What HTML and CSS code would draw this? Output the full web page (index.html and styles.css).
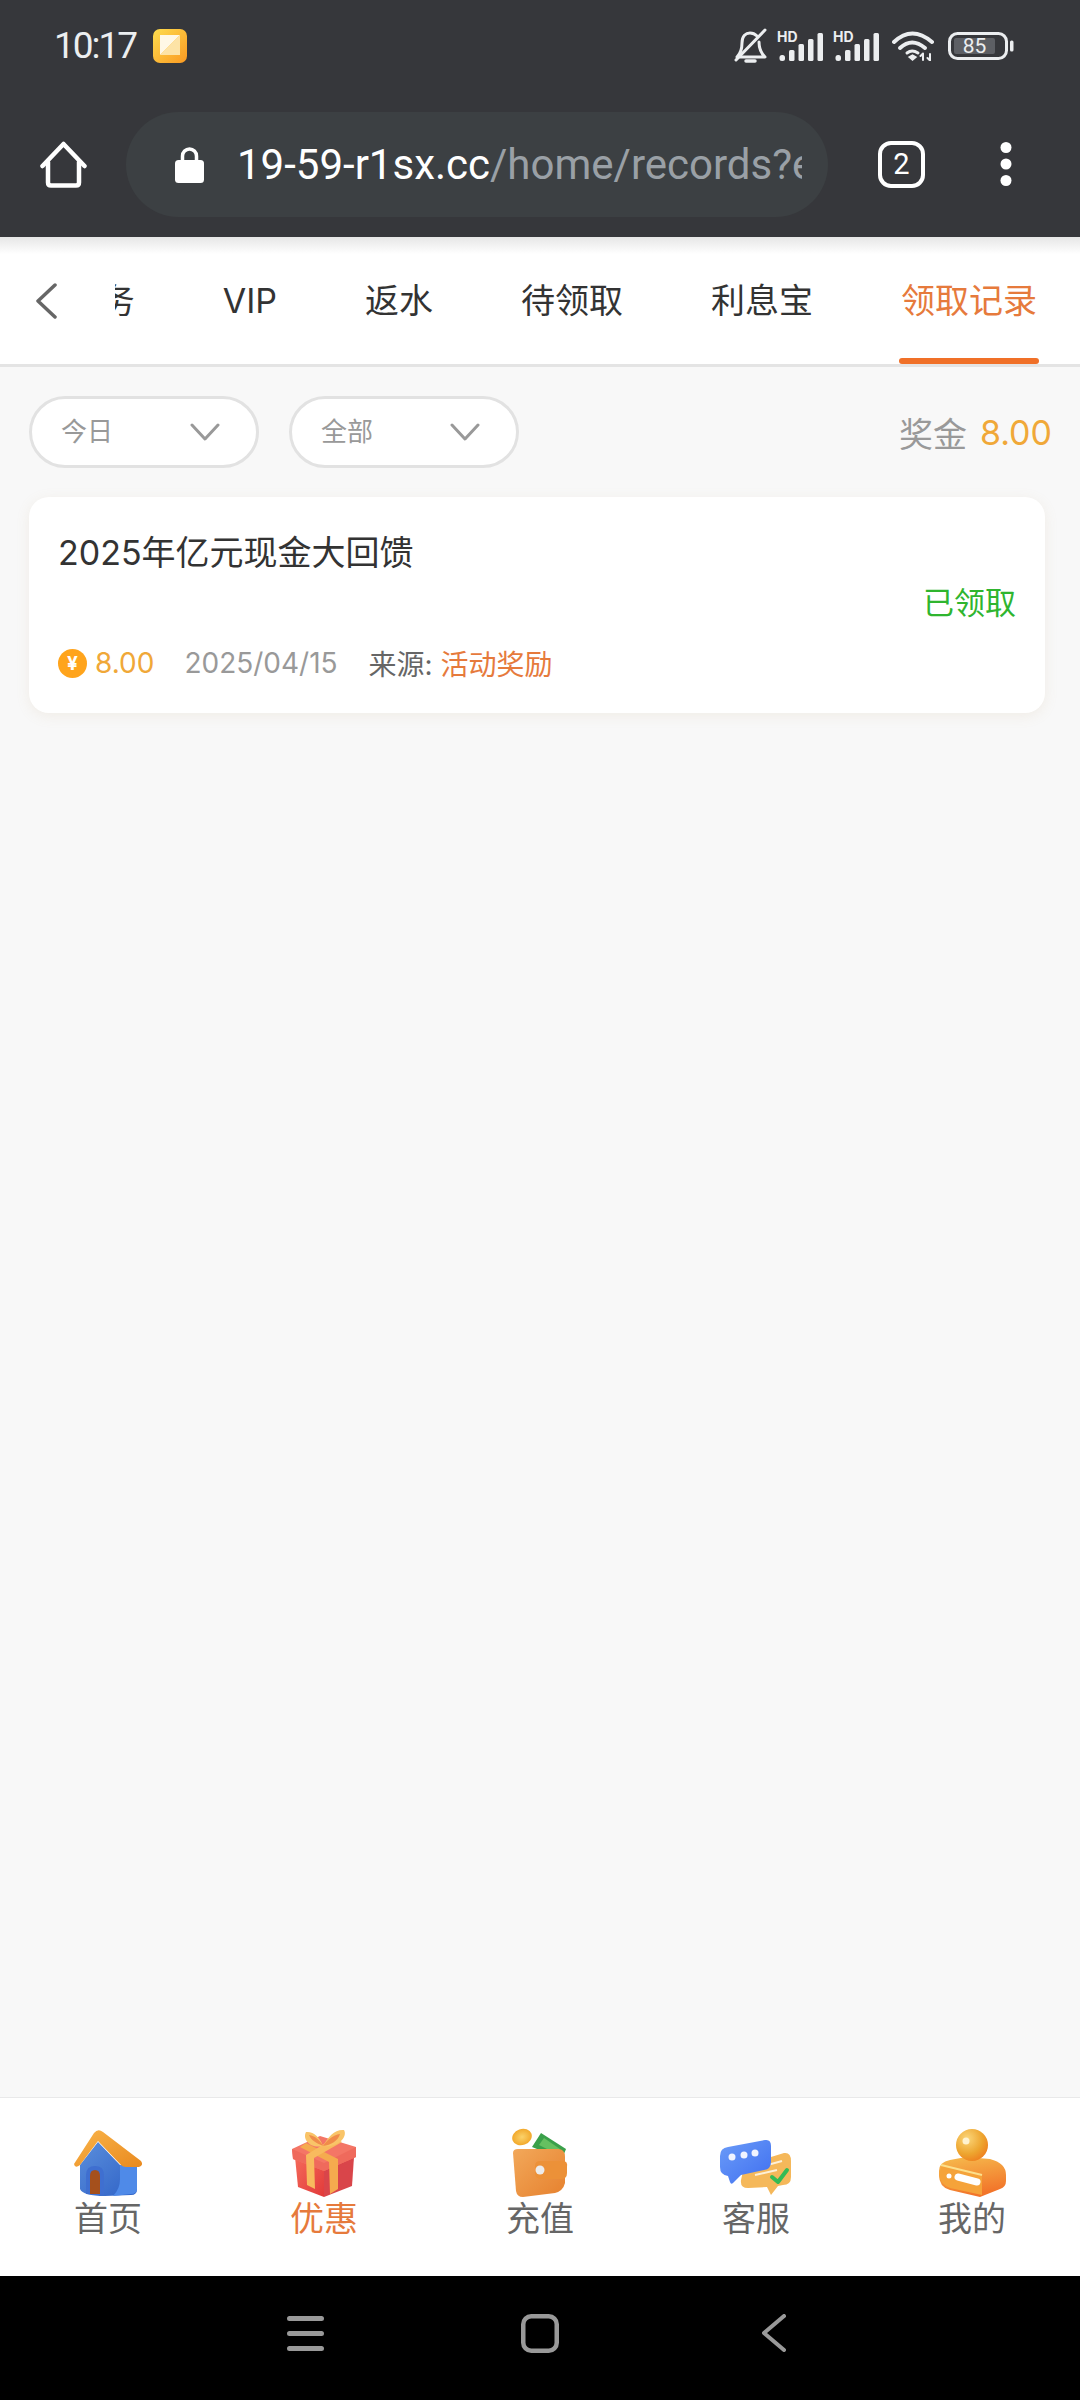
FILE: index.html
```html
<!DOCTYPE html>
<html lang="zh-CN">
<head>
<meta charset="utf-8">
<title>领取记录</title>
<link rel="stylesheet" href="styles.css">
</head>
<body>
<div class="phone">
  <header class="chrome">
    <div class="status">
      <div class="status-left">
        <span class="time">10:17</span>
        <svg class="notif" viewBox="0 0 34 34"><defs><linearGradient id="ng" x1="0" y1="0" x2="1" y2="1"><stop offset="0" stop-color="#fddc4e"/><stop offset="1" stop-color="#fb9a22"/></linearGradient></defs><rect width="34" height="34" rx="7" fill="url(#ng)"/><path d="M7 6H27L7 26Z" fill="#fff8e6"/><path d="M27 6V26H7Z" fill="#fde3a6"/></svg>
      </div>
      <div class="status-right">
        <svg class="bell" viewBox="0 0 34 36" fill="none" stroke="#eceef0" stroke-width="3" stroke-linecap="round" stroke-linejoin="round"><path d="M4 29C8 25 9 21 9 15C9 8 13 5 17 5C20 5 22 6 24 8M26 14C26 21 28 25 32 29H7"/><path d="M3 32L32 2"/><path d="M13 33H22" stroke-width="3.5"/></svg>
        <svg class="signal" viewBox="0 0 46 30"><text x="0" y="11" class="hd">HD</text><rect x="2.5" y="24" width="5.5" height="6" rx="2.5" fill="#eceef0"/><rect x="12" y="19" width="5.5" height="11" rx="1.5" fill="#eceef0"/><rect x="21.5" y="13" width="5.5" height="17" rx="1.5" fill="#eceef0"/><rect x="31" y="8" width="5.5" height="22" rx="1.5" fill="#eceef0"/><rect x="40.500" y="2" width="5.500" height="28" rx="1.500" fill="#eceef0"/></svg>
        <svg class="signal" viewBox="0 0 46 30"><text x="0" y="11" class="hd">HD</text><rect x="2.5" y="24" width="5.5" height="6" rx="2.5" fill="#eceef0"/><rect x="12" y="19" width="5.5" height="11" rx="1.5" fill="#eceef0"/><rect x="21.5" y="13" width="5.5" height="17" rx="1.5" fill="#eceef0"/><rect x="31" y="8" width="5.5" height="22" rx="1.5" fill="#eceef0"/><rect x="40.500" y="2" width="5.500" height="28" rx="1.500" fill="#eceef0"/></svg>
        <svg class="wifi" viewBox="0 0 42 30" fill="none" stroke="#eceef0" stroke-width="4" stroke-linecap="round"><path d="M2 11Q20 -6 40 11"/><path d="M8 17Q20 6 33 17"/><path d="M15 22Q20 18 26 22" stroke-width="3"/><path d="M17 26L20.500 29L24 26L20.500 24Z" fill="#eceef0" stroke-width="1.500"/><path d="M31 23V29M38 23V29M28.500 25L31 22.500M35.500 27L38 29.500" stroke-width="2"/></svg>
        <svg class="battery" viewBox="0 0 67 28"><rect x="1.500" y="1.500" width="57" height="25" rx="8" fill="none" stroke="#eceef0" stroke-width="3"/><rect x="6" y="6" width="41" height="16" rx="2" fill="#5d5f64"/><text x="26.500" y="21" class="batt">85</text><rect x="62" y="8.500" width="3.500" height="11" rx="1.500" fill="#eceef0"/></svg>
      </div>
    </div>
    <div class="toolbar">
      <svg class="home" viewBox="0 0 47 47" fill="none" stroke="#fff" stroke-width="4.500" stroke-linecap="round" stroke-linejoin="round"><path d="M2.500 25L23.500 3L44.500 25"/><path d="M8 21V41.500Q8 44.500 11 44.500H36Q39 44.500 39 41.500V21"/></svg>
      <div class="urlbar">
        <svg class="lock" viewBox="0 0 29 37"><path d="M7.500 18V10A7 7 0 0 1 21.500 10V18" fill="none" stroke="#fff" stroke-width="3.500"/><rect y="14" width="29" height="23" rx="3.500" fill="#fff"/></svg>
        <div class="url"><span class="host">19-59-r1sx.cc</span><span class="path">/home/records?e</span></div>
      </div>
      <div class="tabcount">2</div>
      <svg class="dots" viewBox="0 0 12 44" fill="#fff"><circle cx="6" cy="5.500" r="5.500"/><circle cx="6" cy="22" r="5.500"/><circle cx="6" cy="38.500" r="5.500"/></svg>
    </div>
  </header>

  <nav class="tabs">
    <svg class="back" viewBox="0 0 22 36" fill="none" stroke="#666" stroke-width="3.500" stroke-linecap="round" stroke-linejoin="round"><path d="M20 2L3 18L20 34"/></svg>
    <div class="tab-strip">
      <span class="tab">任务</span>
      <span class="tab">VIP</span>
      <span class="tab">返水</span>
      <span class="tab">待领取</span>
      <span class="tab">利息宝</span>
      <span class="tab active">领取记录</span>
    </div>
  </nav>

  <main class="content">
    <div class="filters">
      <div class="pill"><span class="pill-text">今日</span><svg class="chev" viewBox="0 0 30 18" fill="none" stroke="#999" stroke-width="3" stroke-linecap="round" stroke-linejoin="round"><path d="M2 2L15 16L28 2"/></svg></div>
      <div class="pill"><span class="pill-text">全部</span><svg class="chev" viewBox="0 0 30 18" fill="none" stroke="#999" stroke-width="3" stroke-linecap="round" stroke-linejoin="round"><path d="M2 2L15 16L28 2"/></svg></div>
      <div class="bonus"><span class="bonus-label">奖金</span><span class="bonus-value">8.00</span></div>
    </div>
    <article class="card">
      <h2 class="card-title">2025年亿元现金大回馈</h2>
      <div class="card-state">已领取</div>
      <div class="card-meta">
        <span class="amount"><span class="coin">¥</span>8.00</span>
        <span class="date">2025/04/15</span>
        <span class="source">来源: <em>活动奖励</em></span>
      </div>
    </article>
  </main>

  <footer class="bottom">
    <div class="item">
      <svg class="ico" viewBox="-1 -2 72 70"><defs><linearGradient id="hb" x1="0" y1="0" x2="1" y2="1"><stop offset="0" stop-color="#5a8edc"/><stop offset="1" stop-color="#2f62c6"/></linearGradient><linearGradient id="hr" x1="0" y1="0" x2="1" y2="1"><stop offset="0" stop-color="#f9b44a"/><stop offset="1" stop-color="#e98a1f"/></linearGradient></defs><path d="M7 36L25 13L47 36H64V60Q64 66 58 66L32 67Q10 67 7 60Z" fill="url(#hb)"/><path d="M47 36H64V60Q64 65 58 65L40 67Q47 60 47 50Z" fill="#4f8ae8"/><path d="M13 65V46Q13 37 22 37Q31 37 31 46V66Z" fill="#3f6fd0"/><path d="M17 65V47Q17 41 22 41Q27 41 27 47V65Z" fill="#a5501c"/><path d="M1 35L21 4Q25 -1 30 3L68 32Q71 36 66 38L53 38Q50 38 48 36L25 12L7 36Q2 40 1 35Z" fill="url(#hr)"/></svg>
      <span>首页</span>
    </div>
    <div class="item on">
      <svg class="ico" viewBox="-2 -2 72 70"><defs><linearGradient id="gb" x1="0" y1="0" x2="1" y2="1"><stop offset="0" stop-color="#f46a5a"/><stop offset="1" stop-color="#e23a3a"/></linearGradient></defs><path d="M5 28L34 40V68L8 58Z" fill="url(#gb)"/><path d="M34 40L64 28L62 57L34 68Z" fill="#d9454a"/><path d="M2 20L30 7L66 18V28L34 42L3 30Z" fill="#f47666"/><path d="M2 20L34 34L66 18V28L34 42L3 30Z" fill="#ef6a5c"/><path d="M16 14L48 30L48 60L40 65L39 33L10 18Z" fill="#f5ab4e"/><path d="M52 13L24 29L25 60L17 56L16 26L44 9Z" fill="#f8ba5e"/><path d="M33 17C20 20 12 10 16 3C23 2 30 8 33 17C38 8 45 0 54 1C58 8 48 19 33 17Z" fill="#f9c468"/><path d="M33 17C26 14 21 11 19 6C25 7 30 11 33 17C37 11 43 6 50 5C48 12 41 16 33 17Z" fill="#f08c4a"/></svg>
      <span>优惠</span>
    </div>
    <div class="item">
      <svg class="ico" viewBox="-7 0 72 70"><defs><linearGradient id="wb" x1="0" y1="0" x2="1" y2="1"><stop offset="0" stop-color="#f2a85a"/><stop offset="1" stop-color="#e6812e"/></linearGradient><radialGradient id="cg"><stop offset="0" stop-color="#fbd26a"/><stop offset="1" stop-color="#f2a92c"/></radialGradient></defs><ellipse cx="11" cy="10" rx="10" ry="8" fill="url(#cg)" transform="rotate(-20 11 10)"/><path d="M21 20L30 6L55 22L51 32Z" fill="#3aa04a"/><path d="M28 18L33 11L49 22L46 27Z" fill="#66c060"/><path d="M2 26Q2 22 7 22H47Q54 22 54 30V56Q52 64 44 66L12 70Q6 70 5 64Z" fill="url(#wb)"/><path d="M24 39Q24 34 29 34H52Q57 34 56 40V46Q56 52 50 52H31Q24 52 24 46Z" fill="#ec9138"/><circle cx="29" cy="43" r="4.500" fill="#ececec"/></svg>
      <span>充值</span>
    </div>
    <div class="item">
      <svg class="ico" viewBox="0 -12 72 70"><defs><linearGradient id="cb" x1="0" y1="0" x2="1" y2="1"><stop offset="0" stop-color="#6b9cf8"/><stop offset="1" stop-color="#3f6ff0"/></linearGradient></defs><path d="M38 22L64 14Q71 13 71 22V38Q71 46 63 46L58 47L51 56L47 48L28 49Q20 49 21 41L24 28Z" fill="#f5b85a"/><path d="M33 30L62 22M35 36L57 31" stroke="#fdf0d8" stroke-width="2" fill="none"/><path d="M52 38L58 43L67 31" stroke="#35bb55" stroke-width="4" fill="none" stroke-linecap="round" stroke-linejoin="round"/><path d="M8 8L45 1Q51 0 51 7V23Q51 30 44 31L21 36L13 44Q11 46 10 43L8 37Q0 36 0 28V17Q0 9 8 8Z" fill="url(#cb)"/><circle cx="12" cy="18" r="3.500" fill="#f0f4ff"/><circle cx="24" cy="16" r="3.500" fill="#f0f4ff"/><circle cx="35" cy="14" r="3.500" fill="#f0f4ff"/></svg>
      <span>客服</span>
    </div>
    <div class="item">
      <svg class="ico" viewBox="-2 -2 72 70"><defs><radialGradient id="ub" cx=".35" cy=".3" r=".8"><stop offset="0" stop-color="#fbd67a"/><stop offset=".6" stop-color="#eda52f"/><stop offset="1" stop-color="#ef7a1c"/></radialGradient><linearGradient id="ud" x1="0" y1="0" x2=".3" y2="1"><stop offset="0" stop-color="#f6bd4e"/><stop offset="1" stop-color="#f2752a"/></linearGradient></defs><path d="M12 31L28 28L52 30Q68 34 68 46V52Q68 58 62 60L42 68L12 61Q1 58 1 46V42Q1 33 12 31Z" fill="url(#ud)"/><path d="M4 36L44 47V66L12 59Q2 55 1 46Z" fill="#f5a33a"/><path d="M3 36L44 46" stroke="#fce08c" stroke-width="2" fill="none"/><circle cx="34" cy="16" r="16" fill="url(#ub)"/><circle cx="28" cy="12" r="3.500" fill="#fff3d0"/><circle cx="11" cy="47" r="2.500" fill="#fff"/><path d="M20 48L39 53" stroke="#fff" stroke-width="7" stroke-linecap="round"/></svg>
      <span>我的</span>
    </div>
  </footer>

  <div class="sysnav">
    <svg class="sys-menu" viewBox="0 0 37 35" fill="none" stroke="#999" stroke-width="5" stroke-linecap="round"><path d="M2.500 2.500H34.500M2.500 17.500H34.500M2.500 32.500H34.500"/></svg>
    <svg class="sys-home" viewBox="0 0 38 39" fill="none" stroke="#999" stroke-width="4.500"><rect x="2.250" y="2.250" width="33.500" height="34.500" rx="8"/></svg>
    <svg class="sys-back" viewBox="0 0 24 38" fill="none" stroke="#999" stroke-width="4" stroke-linecap="round" stroke-linejoin="round"><path d="M22 2L2 19L22 36"/></svg>
  </div>
</div>
</body>
</html>
```

FILE: styles.css
```css
* { box-sizing: border-box; }
html, body { margin: 0; padding: 0; }
body {
  font-family: Inter, "Noto Sans CJK SC", sans-serif;
  background: #f8f8f8;
}
.phone {
  width: 1080px;
  height: 2400px;
  display: flex;
  flex-direction: column;
  overflow: hidden;
}

/* browser chrome */
.chrome { background: #36373b; height: 237px; flex: none; }
.status {
  height: 91px;
  display: flex;
  align-items: center;
  justify-content: space-between;
  padding: 0 65px 0 54px;
}
.status-left { display: flex; align-items: center; gap: 17px; }
.time { font-family: Roboto, sans-serif; font-size: 37px; letter-spacing: -2px; color: #eceef0; }
.notif { width: 34px; height: 34px; }
.status-right { display: flex; align-items: center; }
.bell { width: 34px; height: 36px; }
.signal { width: 46px; height: 30px; margin-left: 10px; overflow: visible; }
.hd { font-family: Inter, sans-serif; font-weight: 700; font-size: 14px; fill: #eceef0; }
.wifi { width: 42px; height: 30px; margin-left: 13px; }
.battery { width: 67px; height: 28px; margin-left: 14px; }
.batt { font-family: Roboto, sans-serif; font-size: 21px; fill: #eceef0; text-anchor: middle; }

.toolbar {
  height: 146px;
  display: flex;
  align-items: center;
  padding-left: 40px;
}
.home { width: 47px; height: 47px; flex: none; }
.urlbar {
  margin-left: 39px;
  width: 702px;
  height: 105px;
  border-radius: 53px;
  background: #3c4043;
  display: flex;
  align-items: center;
  padding: 0 26px 0 49px;
  flex: none;
}
.lock { width: 29px; height: 37px; flex: none; }
.url {
  margin-left: 33px;
  font-family: Roboto, sans-serif;
  font-size: 42px;
  white-space: nowrap;
  overflow: hidden;
  flex: 1;
}
.host { color: #fff; }
.path { color: #9aa0a6; }
.tabcount {
  margin-left: 50px;
  width: 47px;
  height: 47px;
  border: 4px solid #fff;
  border-radius: 13px;
  color: #fff;
  font-family: Roboto, sans-serif;
  font-size: 29px;
  display: flex;
  align-items: center;
  justify-content: center;
  flex: none;
}
.dots { width: 12px; height: 44px; margin-left: 75px; flex: none; }

/* tabs */
.tabs {
  height: 130px;
  flex: none;
  display: flex;
  align-items: center;
  background: linear-gradient(#e6e6e6, #fff 17px);
  border-bottom: 3px solid #e4e4e4;
  padding-left: 35px;
}
.back { width: 22px; height: 36px; flex: none; }
.tab-strip {
  margin-left: 58px;
  flex: 1;
  min-width: 0;
  height: 127px;
  display: flex;
  justify-content: flex-end;
  align-items: center;
  gap: 88px;
  padding-right: 43px;
  overflow: hidden;
}
.tab {
  font-size: 34px;
  color: #333;
  white-space: nowrap;
  position: relative;
  line-height: 127px;
  flex: none;
}
.tab.active { color: #e67a3c; }
.tab.active::after {
  content: "";
  position: absolute;
  left: -2px;
  right: -2px;
  bottom: 0;
  height: 6px;
  border-radius: 3px;
  background: #f07028;
}

/* content */
.content { flex: 1; min-height: 0; background: #f8f8f8; padding: 29px 28px 0 29px; }
.filters { display: flex; align-items: center; gap: 30px; height: 72px; }
.pill {
  width: 230px;
  height: 72px;
  border: 3px solid #e2e2e2;
  border-radius: 36px;
  background: #fff;
  display: flex;
  align-items: center;
  justify-content: space-between;
  padding: 0 36px 0 29px;
  font-size: 26px;
  color: #999;
}
.pill-text { padding-bottom: 5px; }
.chev { width: 30px; height: 18px; }
.bonus { margin-left: auto; display: flex; align-items: center; gap: 13px; }
.bonus-label { font-size: 34px; color: #999; }
.bonus-value { font-size: 34px; color: #f0a838; }

.card {
  margin: 29px 7px 0 0;
  height: 216px;
  background: #fff;
  border-radius: 20px;
  padding: 34px 29px 0 29px;
  box-shadow: 0 3px 14px rgba(190, 160, 110, .12);
}
.card-title { margin: 0; font-size: 34px; line-height: 44px; font-weight: 400; color: #333; }
.card-state { margin-top: 8px; font-size: 31px; line-height: 40px; text-align: right; color: #2fb52f; }
.card-meta {
  margin-top: 20px;
  height: 40px;
  display: flex;
  align-items: center;
  font-size: 28px;
}
.amount { display: flex; align-items: center; color: #f0a838; }
.coin {
  width: 29px;
  height: 29px;
  margin-right: 8px;
  border-radius: 50%;
  background: #ffa41c;
  color: #fff;
  font-size: 19px;
  font-weight: 700;
  display: flex;
  align-items: center;
  justify-content: center;
}
.date { margin-left: 30px; color: #999; }
.source { margin-left: 31px; color: #666; }
.source em { font-style: normal; color: #e67a3c; }

/* bottom nav */
.bottom {
  height: 179px;
  flex: none;
  background: #fff;
  border-top: 1px solid #e9e9e9;
  display: grid;
  grid-template-columns: repeat(5, 1fr);
}
.item {
  height: 100%;
  display: flex;
  flex-direction: column;
  align-items: center;
  justify-content: flex-end;
  font-size: 34px;
  line-height: 44px;
  color: #666;
  padding-bottom: 35px;
}
.item.on { color: #e67a3c; }
.ico { height: 70px; width: 72px; }

/* system nav */
.sysnav {
  height: 124px;
  flex: none;
  background: #000;
  display: flex;
  align-items: center;
  padding: 0 0 10px 287px;
}
.sys-menu { width: 37px; height: 35px; }
.sys-home { width: 38px; height: 39px; margin-left: 197px; }
.sys-back { width: 24px; height: 38px; margin-left: 203px; }
```
